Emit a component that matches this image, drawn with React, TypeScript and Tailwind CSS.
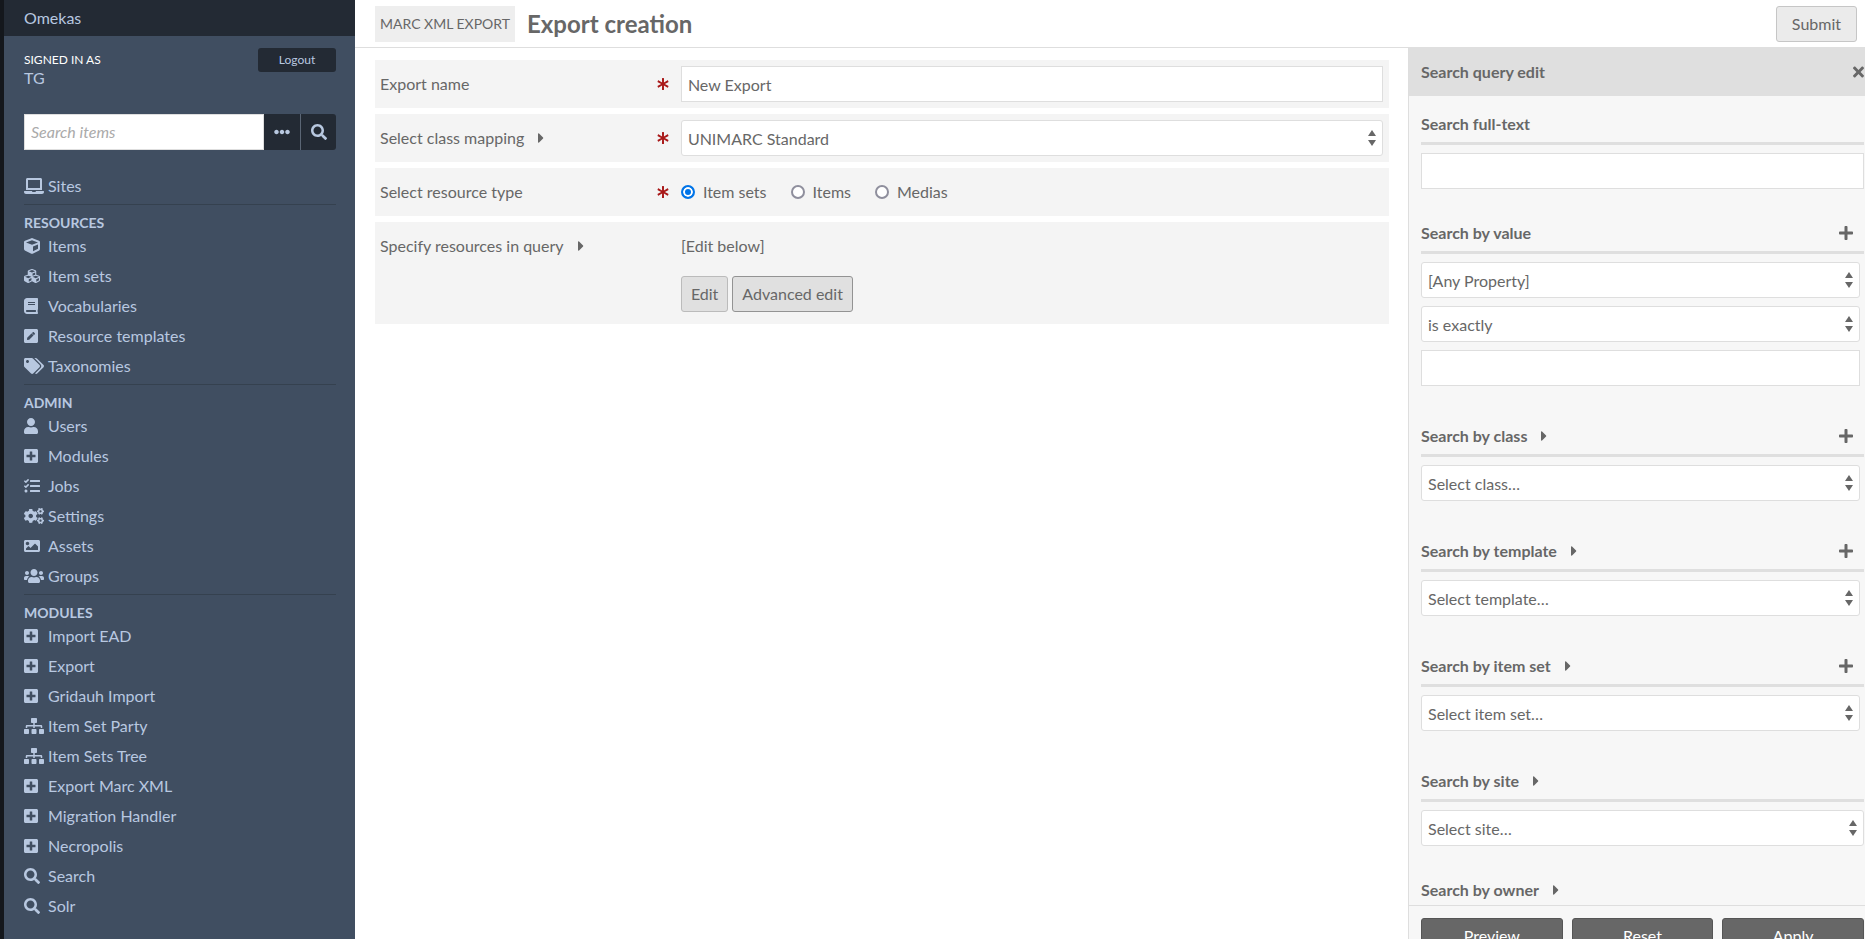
import { useState } from "react";
import type { ReactNode } from "react";
import type { IconType } from "react-icons";
import {
  FaAsterisk,
  FaBook,
  FaCaretRight,
  FaCogs,
  FaCube,
  FaCubes,
  FaEllipsisH,
  FaImage,
  FaLaptop,
  FaPenSquare,
  FaPlus,
  FaPlusSquare,
  FaSearch,
  FaSitemap,
  FaTags,
  FaTasks,
  FaTimes,
  FaUser,
  FaUsers,
} from "react-icons/fa";

type NavItem = { label: string; icon: IconType; size: string };
type NavSection = { title?: string; items: NavItem[] };

const narrow = "h-4 w-3.5";
const square = "h-4 w-4";
const wide = "h-4 w-5";

const sections: NavSection[] = [
  { items: [{ label: "Sites", icon: FaLaptop, size: wide }] },
  {
    title: "Resources",
    items: [
      { label: "Items", icon: FaCube, size: square },
      { label: "Item sets", icon: FaCubes, size: square },
      { label: "Vocabularies", icon: FaBook, size: narrow },
      { label: "Resource templates", icon: FaPenSquare, size: narrow },
      { label: "Taxonomies", icon: FaTags, size: wide },
    ],
  },
  {
    title: "Admin",
    items: [
      { label: "Users", icon: FaUser, size: narrow },
      { label: "Modules", icon: FaPlusSquare, size: narrow },
      { label: "Jobs", icon: FaTasks, size: square },
      { label: "Settings", icon: FaCogs, size: wide },
      { label: "Assets", icon: FaImage, size: square },
      { label: "Groups", icon: FaUsers, size: wide },
    ],
  },
  {
    title: "Modules",
    items: [
      { label: "Import EAD", icon: FaPlusSquare, size: narrow },
      { label: "Export", icon: FaPlusSquare, size: narrow },
      { label: "Gridauh Import", icon: FaPlusSquare, size: narrow },
      { label: "Item Set Party", icon: FaSitemap, size: wide },
      { label: "Item Sets Tree", icon: FaSitemap, size: wide },
      { label: "Export Marc XML", icon: FaPlusSquare, size: narrow },
      { label: "Migration Handler", icon: FaPlusSquare, size: narrow },
      { label: "Necropolis", icon: FaPlusSquare, size: narrow },
      { label: "Search", icon: FaSearch, size: square },
      { label: "Solr", icon: FaSearch, size: square },
    ],
  },
];

function Sidebar() {
  return (
    <div className="flex w-[355px] shrink-0 flex-col border-l-4 border-[#14171c] bg-[#404e61] text-[#b8c8e0]">
      <header className="bg-[#232a34] px-5 py-1.5">
        <a href="#" className="block leading-6">Omekas</a>
      </header>
      <div className="flex h-[54px] items-start justify-between pt-3 pr-[19px] pl-5">
        <div>
          <p className="text-xs leading-6 text-white uppercase">Signed in as</p>
          <a href="#" className="-mt-1 block leading-5">TG</a>
        </div>
        <button type="button" className="h-6 w-[78px] rounded-[3px] bg-[#232a34] text-xs">
          Logout
        </button>
      </div>
      <form className="mt-6 mr-[19px] ml-5 flex h-9" onSubmit={(e) => e.preventDefault()}>
        <input
          type="text"
          aria-label="Search items"
          placeholder="Search items"
          className="w-full min-w-0 flex-1 border border-[#dedede] bg-white px-1.5 text-[#676767] placeholder:text-[#aaaaaa] placeholder:italic"
        />
        <button type="button" aria-label="Search options" className="flex w-9 items-center justify-center bg-[#232a34]">
          <FaEllipsisH className="size-4" />
        </button>
        <button
          type="submit"
          aria-label="Search"
          className="flex w-9 items-center justify-center rounded-r-[3px] border-l border-[#5b6675] bg-[#232a34]"
        >
          <FaSearch className="size-4" />
        </button>
      </form>
      <nav className="mt-[21px] pr-[19px] pl-5">
        {sections.map((section, i) => (
          <section key={i} className={section.title ? "mt-[3px] border-t border-[#35414f]" : ""}>
            {section.title && (
              <h4 className="pt-2.5 text-sm leading-4 font-bold uppercase">{section.title}</h4>
            )}
            <ul>
              {section.items.map(({ label, icon: Icon, size }) => (
                <li key={label}>
                  <a href="#" className="flex h-[30px] items-center">
                    <span className="w-6 shrink-0">
                      <Icon className={size} />
                    </span>
                    {label}
                  </a>
                </li>
              ))}
            </ul>
          </section>
        ))}
      </nav>
    </div>
  );
}

function SelectBox({ id, label, value }: { id: string; label?: string; value: string }) {
  return (
    <div className="relative">
      <select
        id={id}
        aria-label={label}
        className="block h-9 w-full appearance-none rounded-[3px] border border-[#dedede] bg-white px-1.5 pt-0.5 text-[#676767]"
      >
        <option>{value}</option>
      </select>
      <svg viewBox="0 0 8 16" className="pointer-events-none absolute top-2.5 right-[7px] h-4 w-2" fill="#676767">
        <path d="M4 0 8 6H0Z" />
        <path d="M4 16 0 10H8Z" />
      </svg>
    </div>
  );
}

function ExpandButton({ about }: { about: string }) {
  return (
    <button type="button" aria-label={"About " + about} className="ml-3.5">
      <FaCaretRight className="h-4 w-1.5" />
    </button>
  );
}

function Field({
  label,
  htmlFor,
  required,
  expandable,
  children,
}: {
  label: string;
  htmlFor?: string;
  required?: boolean;
  expandable?: boolean;
  children: ReactNode;
}) {
  return (
    <div className="flex bg-[#f4f4f4] py-1.5 pr-1.5 pl-[5px]">
      <div className="flex h-9 w-[30%] shrink-0 items-center pr-3">
        <label htmlFor={htmlFor}>{label}</label>
        {expandable && <ExpandButton about={label} />}
        {required && <FaAsterisk className="ml-auto size-3 text-[#a91919]" />}
      </div>
      <div className="min-w-0 flex-1">{children}</div>
    </div>
  );
}

const resourceTypes = ["Item sets", "Items", "Medias"];

function ExportForm() {
  const [type, setType] = useState("Item sets");
  return (
    <div className="flex min-w-0 flex-1 flex-col gap-1.5 pt-[13px] pr-[19px] pl-5">
      <Field label="Export name" htmlFor="export-name" required>
        <input
          id="export-name"
          type="text"
          defaultValue="New Export"
          className="block h-9 w-full border border-[#dedede] bg-white px-1.5"
        />
      </Field>
      <Field label="Select class mapping" htmlFor="class-mapping" required expandable>
        <SelectBox id="class-mapping" value="UNIMARC Standard" />
      </Field>
      <Field label="Select resource type" required>
        <div role="radiogroup" aria-label="Select resource type" className="flex h-9 items-center gap-6">
          {resourceTypes.map((name) => (
            <label key={name} className="flex items-center gap-2">
              <input
                type="radio"
                name="resource-type"
                checked={type === name}
                onChange={() => setType(name)}
                className="size-3.5 appearance-none rounded-full border-2 border-[#8f8f9d] bg-white checked:border-[#0074e8] checked:bg-[#0074e8] checked:shadow-[inset_0_0_0_2px_white]"
              />
              {name}
            </label>
          ))}
        </div>
      </Field>
      <Field label="Specify resources in query" expandable>
        <p className="h-9 leading-9">[Edit below]</p>
        <div className="mt-3 mb-1.5 flex gap-1">
          <button type="button" className="h-9 rounded-[3px] border border-[#bbbbbb] bg-[#e0e0e0] px-[9px]">
            Edit
          </button>
          <button type="button" className="h-9 rounded-[3px] border border-[#939393] bg-[#e0e0e0] px-[9px]">
            Advanced edit
          </button>
        </div>
      </Field>
    </div>
  );
}

function SearchGroup({
  title,
  expandable,
  repeatable,
  children,
}: {
  title: string;
  expandable?: boolean;
  repeatable?: boolean;
  children?: ReactNode;
}) {
  return (
    <section className="mb-8">
      <div className="mb-2 flex items-center border-b-3 border-[#dfdfdf] pb-1.5">
        <h4 className="leading-6 font-bold">{title}</h4>
        {expandable && <ExpandButton about={title} />}
        {repeatable && (
          <button type="button" aria-label={"Add to " + title} className="mr-[11px] ml-auto">
            <FaPlus className="h-4 w-3.5" />
          </button>
        )}
      </div>
      {repeatable ? <div className="mr-1 mb-[38px] flex flex-col gap-2">{children}</div> : children}
    </section>
  );
}

function QueryPanel() {
  return (
    <aside className="flex h-screen w-[457px] shrink-0 flex-col border-l border-[#dedede] bg-[#f7f7f7]">
      <div className="flex h-[49px] shrink-0 items-center justify-between bg-[#dfdfdf] pr-px pl-3">
        <h3 className="font-bold">Search query edit</h3>
        <button type="button" aria-label="Close">
          <FaTimes className="h-4 w-[11px]" />
        </button>
      </div>
      <div className="min-h-0 flex-1 overflow-hidden pt-4 pr-px pl-3">
        <SearchGroup title="Search full-text">
          <input
            type="text"
            aria-label="Search full-text"
            className="block h-9 w-full border border-[#dedede] bg-white px-1.5"
          />
        </SearchGroup>
        <SearchGroup title="Search by value" repeatable>
          <SelectBox id="property" label="Property" value="[Any Property]" />
          <SelectBox id="query-type" label="Query type" value="is exactly" />
          <input
            type="text"
            aria-label="Value"
            className="block h-9 w-full border border-[#dedede] bg-white px-1.5"
          />
        </SearchGroup>
        <SearchGroup title="Search by class" expandable repeatable>
          <SelectBox id="class" label="Class" value="Select class…" />
        </SearchGroup>
        <SearchGroup title="Search by template" expandable repeatable>
          <SelectBox id="template" label="Template" value="Select template…" />
        </SearchGroup>
        <SearchGroup title="Search by item set" expandable repeatable>
          <SelectBox id="item-set" label="Item set" value="Select item set…" />
        </SearchGroup>
        <SearchGroup title="Search by site" expandable>
          <SelectBox id="site" label="Site" value="Select site…" />
        </SearchGroup>
        <SearchGroup title="Search by owner" expandable />
      </div>
      <div className="grid shrink-0 grid-cols-3 gap-[9px] border-t border-[#dedede] pt-3 pr-px pb-8 pl-3 text-white">
        {["Preview", "Reset", "Apply"].map((name) => (
          <button key={name} type="button" className="h-9 rounded-[3px] border border-[#555555] bg-[#676767]">
            {name}
          </button>
        ))}
      </div>
    </aside>
  );
}

export default function App() {
  return (
    <div className="flex h-screen overflow-hidden bg-white font-[Lato,sans-serif] text-base leading-6 text-[#676767]">
      <Sidebar />
      <main className="flex min-w-0 flex-1 flex-col">
        <header className="flex h-12 shrink-0 items-center border-b border-[#dedede] pr-2 pl-5">
          <span className="flex h-9 items-center bg-[#eeeeee] px-[5px] text-sm uppercase">Marc XML Export</span>
          <h1 className="ml-3 text-2xl font-bold">Export creation</h1>
          <button
            type="submit"
            className="ml-auto h-9 rounded-[3px] border border-[#c6c6c6] bg-[#ebebeb] px-[15px]"
          >
            Submit
          </button>
        </header>
        <div className="-mt-px flex items-start">
          <ExportForm />
          <QueryPanel />
        </div>
      </main>
    </div>
  );
}
